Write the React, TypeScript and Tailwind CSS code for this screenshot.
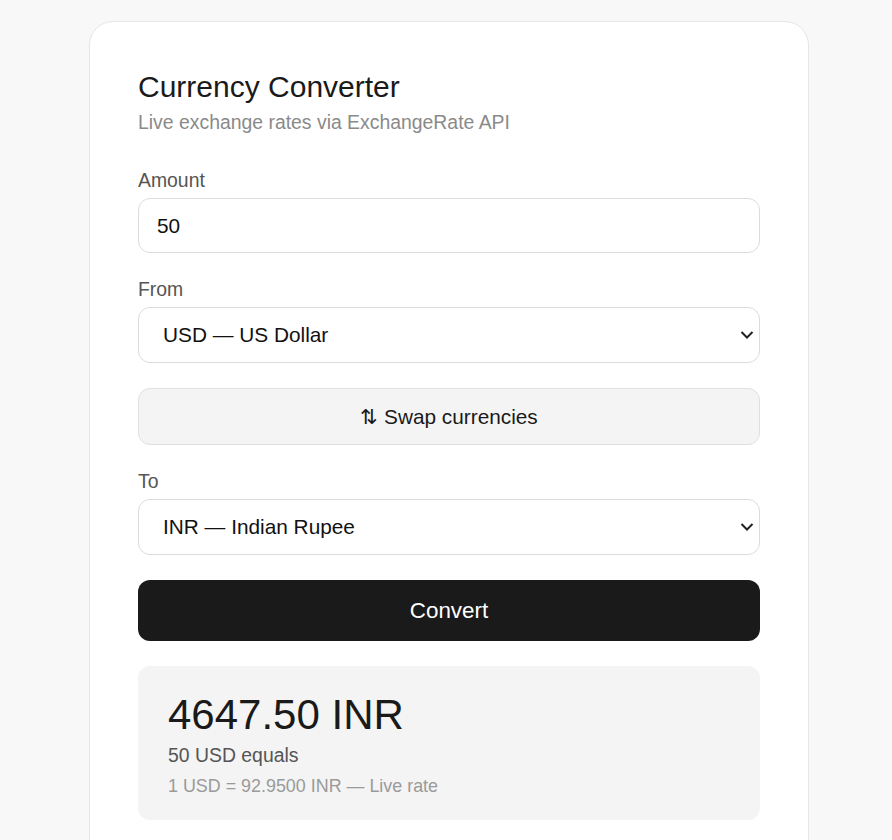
import { useState } from 'react';

const currencies = [
  { code: 'USD', name: 'US Dollar' },
  { code: 'EUR', name: 'Euro' },
  { code: 'GBP', name: 'British Pound' },
  { code: 'INR', name: 'Indian Rupee' },
  { code: 'JPY', name: 'Japanese Yen' },
];

const rates: Record<string, number> = { USD: 1, EUR: 0.92, GBP: 0.79, INR: 92.95, JPY: 151.2 };

function CurrencySelect({ value, onChange }: { value: string; onChange: (v: string) => void }) {
  return (
    <div className="relative">
      <select
        value={value}
        onChange={(e) => onChange(e.target.value)}
        className="block h-[56px] w-full appearance-none rounded-[12px] border border-[#dcdcdc] bg-white pl-[24px] pr-[40px] text-[20.8px] text-[#111] outline-none"
      >
        {currencies.map((c) => (
          <option key={c.code} value={c.code}>
            {c.code} — {c.name}
          </option>
        ))}
      </select>
      {/* chevron */}
      <svg
        className="pointer-events-none absolute right-[6px] top-1/2 -translate-y-1/2"
        width="14"
        height="9"
        viewBox="0 0 14 9"
        fill="none"
      >
        <path d="M1.5 1.5 L7 7 L12.5 1.5" stroke="#222" strokeWidth="2" />
      </svg>
    </div>
  );
}

export default function App() {
  const [amount, setAmount] = useState('50');
  const [from, setFrom] = useState('USD');
  const [to, setTo] = useState('INR');

  const rate = rates[to] / rates[from];
  const result = (parseFloat(amount || '0') * rate).toFixed(2);

  const swap = () => {
    setFrom(to);
    setTo(from);
  };

  return (
    <div className="min-h-screen bg-[#f8f8f8] pt-[21px] pl-[89px] font-['Liberation_Sans',Arial,sans-serif]">
      <div className="w-[720px] rounded-[24px] border border-[#e6e6e6] bg-white px-12 pt-[47px] pb-12">
        <h1 className="text-[30px] leading-[36px] font-normal text-[#1a1a1a]">Currency Converter</h1>
        <p className="mt-[5px] text-[19.4px] leading-[24px] text-[#8a8a8a]">Live exchange rates via ExchangeRate API</p>

        <label className="mt-[34px] mb-[6px] block text-[19.4px] leading-[24px] text-[#555]">Amount</label>
        <input
          value={amount}
          onChange={(e) => setAmount(e.target.value)}
          className="block h-[55px] w-full rounded-[12px] border border-[#dcdcdc] bg-white px-[18px] text-[20.8px] text-[#111] outline-none"
        />

        <label className="mt-[24px] mb-[6px] block text-[19.4px] leading-[24px] text-[#555]">From</label>
        <CurrencySelect value={from} onChange={setFrom} />

        <button
          onClick={swap}
          className="mt-[25px] block h-[57px] w-full rounded-[12px] border border-[#e0e0e0] bg-[#f4f4f4] text-[20.8px] text-[#1a1a1a]"
        >
          ⇅ Swap currencies
        </button>

        <label className="mt-[24px] mb-[6px] block text-[19.4px] leading-[24px] text-[#555]">To</label>
        <CurrencySelect value={to} onChange={setTo} />

        <button className="mt-[25px] block h-[61px] w-full rounded-[12px] bg-[#1a1a1a] text-[22.4px] text-white">
          Convert
        </button>

        <div className="mt-[25px] rounded-[12px] bg-[#f4f4f4] px-[30px] pt-[24px] pb-[23px]">
          <div className="text-[42px] leading-[50px] text-[#1a1a1a]">
            {result} {to}
          </div>
          <div className="mt-[3px] text-[19.4px] leading-[24px] text-[#555]">
            {amount} {from} equals
          </div>
          <div className="mt-[8px] text-[17.9px] leading-[22px] text-[#9a9a9a]">
            1 {from} = {rate.toFixed(4)} {to} — Live rate
          </div>
        </div>
      </div>
    </div>
  );
}
